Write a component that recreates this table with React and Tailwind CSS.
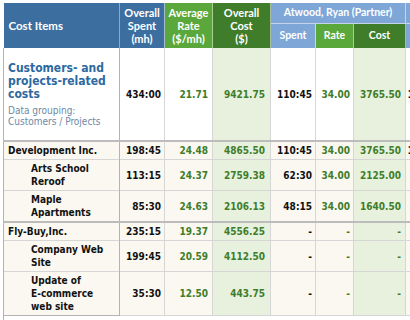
import React from 'react';

const rows = [
  { name: 'Development Inc.', level: 0, spent: '198:45', rate: '24.48', cost: '4865.50', a: ['110:45', '34.00', '3765.50'], next: '110:45', groupTop: true },
  { name: ['Arts School', 'Reroof'], level: 1, spent: '113:15', rate: '24.37', cost: '2759.38', a: ['62:30', '34.00', '2125.00'], next: '62:30' },
  { name: ['Maple', 'Apartments'], level: 1, spent: '85:30', rate: '24.63', cost: '2106.13', a: ['48:15', '34.00', '1640.50'], next: '48:15' },
  { name: 'Fly-Buy,Inc.', level: 0, spent: '235:15', rate: '19.37', cost: '4556.25', a: ['-', '-', '-'], next: '-', groupTop: true },
  { name: ['Company Web', 'Site'], level: 1, spent: '199:45', rate: '20.59', cost: '4112.50', a: ['-', '-', '-'], next: '-' },
  { name: ['Update of', 'E-commerce', 'web site'], level: 1, spent: '35:30', rate: '12.50', cost: '443.75', a: ['-', '-', '-'], next: '-' },
];

const bodyFont = "font-['DejaVu_Sans_Condensed','DejaVu_Sans',sans-serif]";
const headFont = "font-['Lato','Liberation_Sans',sans-serif]";

export default function App() {
  return (
    <div className="w-[410px] h-[320px] overflow-hidden bg-white pt-[3px] pl-[3px]">
      <table className={`table-fixed border-collapse w-[442px] ${bodyFont}`}>
        <colgroup>
          <col className="w-[116px]" />
          <col className="w-[45px]" />
          <col className="w-[48px]" />
          <col className="w-[58px]" />
          <col className="w-[45px]" />
          <col className="w-[38px]" />
          <col className="w-[52px]" />
          <col className="w-[40px]" />
        </colgroup>
        <thead className={`${headFont} text-white font-bold text-[11px] leading-[13px]`}>
          <tr className="h-[20px]">
            <th rowSpan={2} className="bg-[#3c6e9f] border-r border-[#8fa9c4] text-left pl-[5px] align-middle text-[11.5px]">Cost Items</th>
            <th rowSpan={2} className="bg-[#3c6e9f] border-r border-[#a6bccf] text-center align-middle">Overall<br />Spent<br />(mh)</th>
            <th rowSpan={2} className="bg-[#5aa83b] border-r border-[#a8cf96] text-center align-middle">Average<br />Rate<br />($/mh)</th>
            <th rowSpan={2} className="bg-[#3f7d2b] border-r border-[#a6bc9a] text-center align-middle">Overall<br />Cost<br />($)</th>
            <th colSpan={3} className="bg-[#7ea7d7] border-r border-b border-[#c5d6ea] text-center text-[10.5px] font-bold">Atwood, Ryan (Partner)</th>
            <th className="bg-[#7ea7d7] border-b border-[#c5d6ea]"></th>
          </tr>
          <tr className="h-[25px] text-[10.5px]">
            <th className="bg-[#7ea7d7] border-r border-[#c5d6ea]">Spent</th>
            <th className="bg-[#5aa83b] border-r border-[#a8cf96]">Rate</th>
            <th className="bg-[#3f7d2b] border-r border-[#a6bc9a]">Cost</th>
            <th className="bg-[#7ea7d7]"></th>
          </tr>
        </thead>
        <tbody className="text-[10px] leading-[13px] font-bold">
          <tr className="bg-white">
            <td className="border-l border-r border-[#b3b3b3] pl-[4px] pr-[4px] pt-[14px] pb-[13px] align-top">
              <div className="text-[12px] leading-[13px] text-[#2d69a0]">Customers- and projects-related costs</div>
              <div className="mt-[4px] text-[10px] leading-[11px] font-normal text-[#6d89a6]">Data grouping: Customers / Projects</div>
            </td>
            <td className="border-r border-[#d6d6d6] text-right pr-[3px] text-[#111]">434:00</td>
            <td className="border-r border-[#d6d6d6] text-right pr-[4px] text-[#3e7d2b]">21.71</td>
            <td className="border-r border-[#d6d6d6] bg-[#e8f1dd] text-right pr-[5px] text-[#3e7d2b]">9421.75</td>
            <td className="border-r border-[#d6d6d6] text-right pr-[3px] text-[#111]">110:45</td>
            <td className="border-r border-[#d6d6d6] text-right pr-[3px] text-[#3e7d2b]">34.00</td>
            <td className="border-r border-[#d6d6d6] bg-[#e8f1dd] text-right pr-[4px] text-[#3e7d2b]">3765.50</td>
            <td className="text-right pr-[3px] text-[#111]">110:45</td>
          </tr>
          {rows.map((r, i) => {
            const top = r.groupTop ? 'border-t-2 border-t-[#bcbcbc]' : 'border-t border-t-[#d6d6d6]';
            const lines = Array.isArray(r.name) ? r.name : [r.name];
            return (
              <tr key={i} className="bg-[#faf8f1]">
                <td className={`${top} border-l border-r border-[#b3b3b3] py-[2px] pr-[4px] ${r.level ? 'pl-[27px]' : 'pl-[4px]'} text-[#111]`}>
                  {lines.map((l, j) => <div key={j}>{l}</div>)}
                </td>
                <td className={`${top} border-r border-r-[#d6d6d6] text-right pr-[3px] text-[#111]`}>{r.spent}</td>
                <td className={`${top} border-r border-r-[#d6d6d6] text-right pr-[4px] text-[#3e7d2b]`}>{r.rate}</td>
                <td className={`${top} border-r border-r-[#d6d6d6] bg-[#e8f1dd] text-right pr-[5px] text-[#3e7d2b]`}>{r.cost}</td>
                <td className={`${top} border-r border-r-[#d6d6d6] text-right pr-[3px] text-[#111]`}>{r.a[0]}</td>
                <td className={`${top} border-r border-r-[#d6d6d6] text-right pr-[3px] text-[#3e7d2b]`}>{r.a[1]}</td>
                <td className={`${top} border-r border-r-[#d6d6d6] bg-[#e8f1dd] text-right pr-[4px] text-[#3e7d2b]`}>{r.a[2]}</td>
                <td className={`${top} text-right pr-[3px] text-[#111]`}>{r.next}</td>
              </tr>
            );
          })}
          <tr className="bg-white h-[20px]">
            <td className="border-t border-l border-[#b3b3b3]"></td>
            <td colSpan={7} className="border-t border-[#d6d6d6]"></td>
          </tr>
        </tbody>
      </table>
    </div>
  );
}
